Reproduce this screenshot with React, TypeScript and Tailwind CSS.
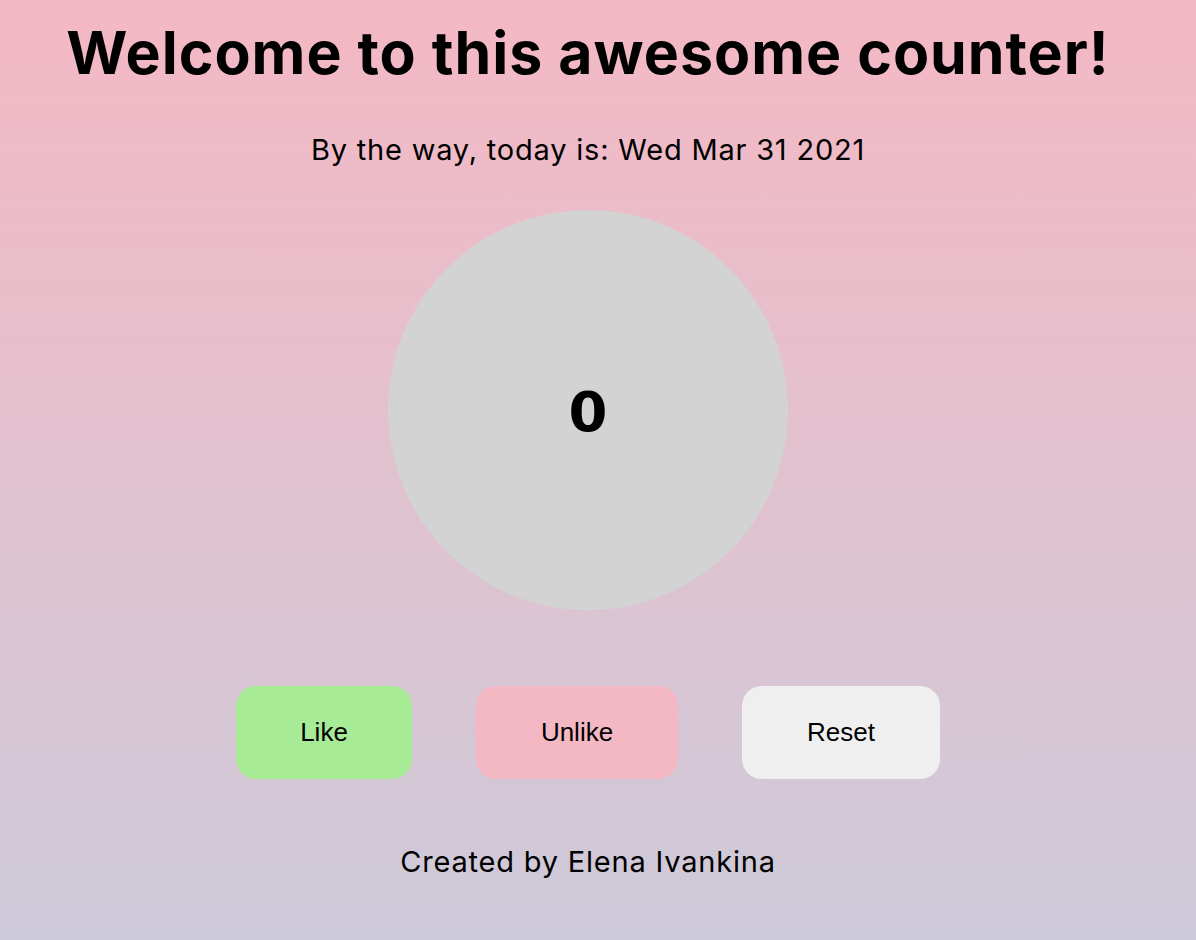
import React, { useState } from "react";

export default function App() {
  const [count, setCount] = useState(0);
  return (
    <div className="min-h-[940px] w-full bg-gradient-to-b from-[#f4b8c4] to-[#cdcad9]">
      <div className="w-[1176px] flex flex-col items-center font-['Inter',sans-serif] text-black">
        <h1 className="mt-[17px] text-[59px] leading-[72px] font-bold tracking-[1px]">
          Welcome to this awesome counter!
        </h1>
        <p className="mt-[44px] text-[29px] leading-[34px] tracking-[0.8px]">
          By the way, today is: Wed Mar 31 2021
        </p>
        <div className="mt-[43px] w-[400px] h-[400px] rounded-full bg-[#d3d3d3] flex items-center justify-center">
          <span className="font-['DejaVu_Sans',sans-serif] font-bold text-[56px] leading-none mt-[3px]">
            {count}
          </span>
        </div>
        <div className="mt-[76px] flex gap-16 font-['Liberation_Sans',Arial,sans-serif] text-[26px]">
          <button
            onClick={() => setCount(count + 1)}
            className="h-[93px] w-[176px] rounded-[20px] bg-[#a8eb97]"
          >
            Like
          </button>
          <button
            onClick={() => setCount(count - 1)}
            className="h-[93px] w-[202px] rounded-[20px] bg-[#f4b8c4]"
          >
            Unlike
          </button>
          <button
            onClick={() => setCount(0)}
            className="h-[93px] w-[198px] rounded-[20px] bg-[#efefef]"
          >
            Reset
          </button>
        </div>
        <p className="mt-[66px] text-[29px] leading-[34px] tracking-[0.8px]">
          Created by Elena Ivankina
        </p>
      </div>
    </div>
  );
}
